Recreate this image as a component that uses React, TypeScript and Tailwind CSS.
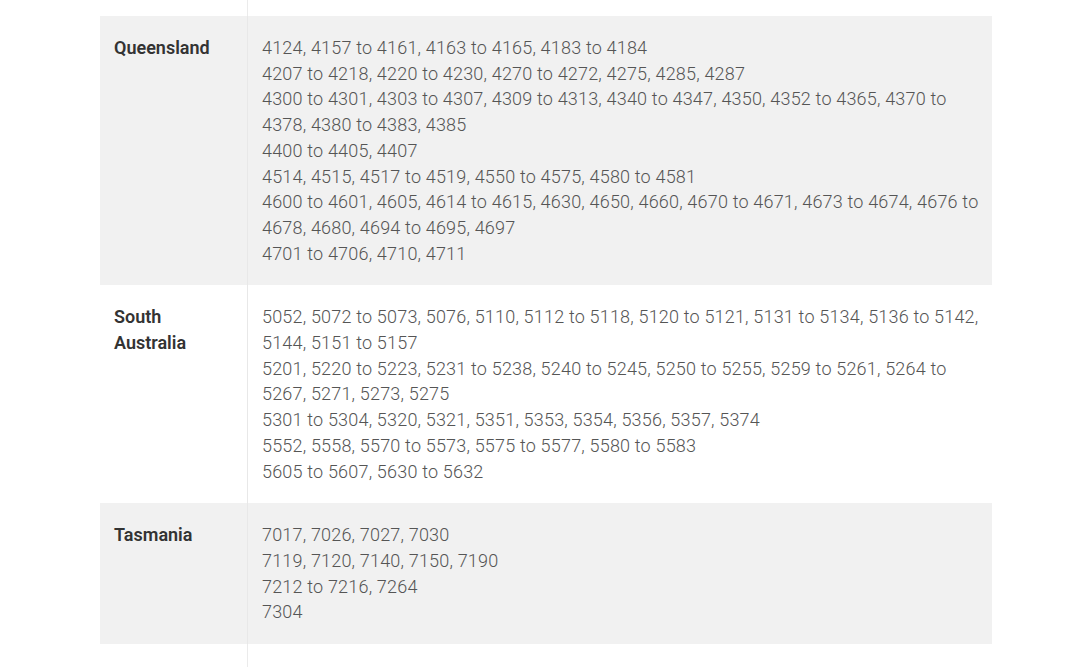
import React from "react";

const rows: { label: string; lines: string[]; gray: boolean }[] = [
  {
    label: "Queensland",
    gray: true,
    lines: [
      "4124, 4157 to 4161, 4163 to 4165, 4183 to 4184",
      "4207 to 4218, 4220 to 4230, 4270 to 4272, 4275, 4285, 4287",
      "4300 to 4301, 4303 to 4307, 4309 to 4313, 4340 to 4347, 4350, 4352 to 4365, 4370 to 4378, 4380 to 4383, 4385",
      "4400 to 4405, 4407",
      "4514, 4515, 4517 to 4519, 4550 to 4575, 4580 to 4581",
      "4600 to 4601, 4605, 4614 to 4615, 4630, 4650, 4660, 4670 to 4671, 4673 to 4674, 4676 to 4678, 4680, 4694 to 4695, 4697",
      "4701 to 4706, 4710, 4711",
    ],
  },
  {
    label: "South Australia",
    gray: false,
    lines: [
      "5052, 5072 to 5073, 5076, 5110, 5112 to 5118, 5120 to 5121, 5131 to 5134, 5136 to 5142, 5144, 5151 to 5157",
      "5201, 5220 to 5223, 5231 to 5238, 5240 to 5245, 5250 to 5255, 5259 to 5261, 5264 to 5267, 5271, 5273, 5275",
      "5301 to 5304, 5320, 5321, 5351, 5353, 5354, 5356, 5357, 5374",
      "5552, 5558, 5570 to 5573, 5575 to 5577, 5580 to 5583",
      "5605 to 5607, 5630 to 5632",
    ],
  },
  {
    label: "Tasmania",
    gray: true,
    lines: ["7017, 7026, 7027, 7030", "7119, 7120, 7140, 7150, 7190", "7212 to 7216, 7264", "7304"],
  },
];

export default function App() {
  return (
    <div
      className="w-[1080px] h-[667px] bg-white overflow-hidden"
      style={{ fontFamily: "Roboto, 'Liberation Sans', sans-serif" }}
    >
      <div className="ml-[100px] w-[892px] flex flex-col">
        <div className="flex h-[16px]">
          <div className="w-[148px] border-r border-[#ebebeb]" />
        </div>
        {rows.map((r) => (
          <div key={r.label} className={`flex ${r.gray ? "bg-[#f1f1f1]" : "bg-white"}`}>
            <div className="w-[148px] shrink-0 border-r border-[#e8e8e8] pl-[14px] pr-[14px] py-[19px] text-[18px] leading-[25.7px] font-semibold text-[#333333]">
              {r.label}
            </div>
            <div className="flex-1 pl-[14px] pr-[10px] py-[19px] text-[18px] leading-[25.7px] font-light tracking-[0.19px] text-[#555555]">
              {r.lines.map((l, i) => (
                <div key={i}>{l}</div>
              ))}
            </div>
          </div>
        ))}
        <div className="flex h-[30px]">
          <div className="w-[148px] border-r border-[#ebebeb]" />
        </div>
      </div>
    </div>
  );
}
